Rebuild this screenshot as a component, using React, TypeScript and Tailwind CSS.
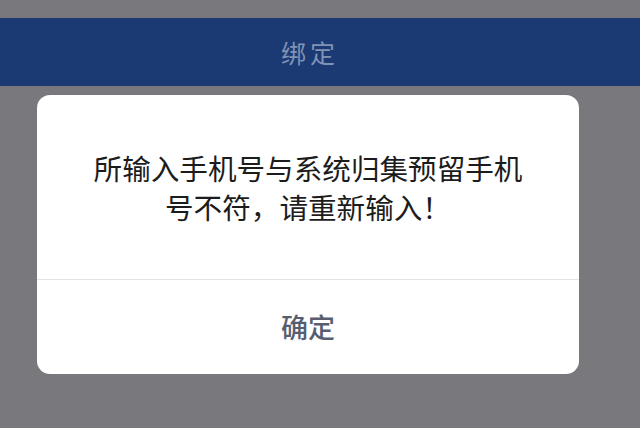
export default function App() {
  return (
    <div
      className="w-[640px] h-[428px] overflow-hidden bg-[#79787d] pt-[18px]"
      style={{ fontFamily: '"Noto Sans CJK SC", "Noto Sans", sans-serif' }}
    >
      {/* nav bar */}
      <div className="h-[68px] bg-[#1b3a73] flex items-center justify-center pr-[20px]">
        <span className="text-[25px] tracking-[4px] text-[#8093b4] leading-none">绑定</span>
      </div>

      {/* alert */}
      <div className="ml-[37px] mt-[9px] w-[542px] h-[279px] bg-white rounded-[13px] flex flex-col overflow-hidden">
        <div className="h-[185px] flex items-center justify-center px-[48px] border-b border-[#e4e4e6]">
          <p className="text-[28.6px] leading-[39px] text-[#1c1c1c] text-center">
            所输入手机号与系统归集预留手机号不符，请重新输入！
          </p>
        </div>
        <button className="flex-1 flex items-center justify-center text-[27px] text-[#575e70] font-medium">
          确定
        </button>
      </div>
    </div>
  );
}
